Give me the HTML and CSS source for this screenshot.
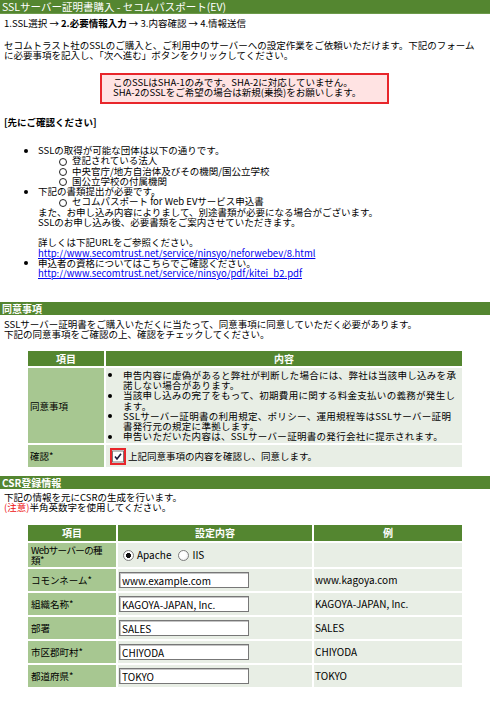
FILE: index.html
```html
<!DOCTYPE html>
<html lang="ja">
<head>
<meta charset="utf-8">
<title>SSLサーバー証明書購入</title>
<link rel="stylesheet" href="styles.css">
</head>
<body>
<div class="bar">SSLサーバー証明書購入 - セコムパスポート(EV)</div>
<div class="content">
  <p class="steps">1.SSL選択 → <b>2.必要情報入力</b> → 3.内容確認 → 4.情報送信</p>
  <p class="intro">セコムトラスト社のSSLのご購入と、ご利用中のサーバーへの設定作業をご依頼いただけます。下記のフォーム<br>に必要事項を記入し、「次へ進む」ボタンをクリックしてください。</p>
  <div class="notice">このSSLはSHA-1のみです。SHA-2に対応していません。<br>SHA-2のSSLをご希望の場合は新規(乗換)をお願いします。</div>
  <p class="confirm-title">[先にご確認ください]</p>
  <ul class="guide">
    <li>SSLの取得が可能な団体は以下の通りです。
      <ul>
        <li>登記されている法人</li>
        <li>中央官庁/地方自治体及びその機関/国公立学校</li>
        <li>国公立学校の付属機関</li>
      </ul>
    </li>
    <li>下記の書類提出が必要です。
      <ul>
        <li>セコムパスポート for Web EVサービス申込書</li>
      </ul>
      また、お申し込み内容によりまして、別途書類が必要になる場合がございます。<br>SSLのお申し込み後、必要書類をご案内させていただきます。<br><br>詳しくは下記URLをご参照ください。<br><a href="#">http://www.secomtrust.net/service/ninsyo/neforwebev/8.html</a>
    </li>
    <li>申込者の資格についてはこちらでご確認ください。<br><a href="#">http://www.secomtrust.net/service/ninsyo/pdf/kitei_b2.pdf</a></li>
  </ul>
</div>

<div class="section-bar bar-agree">同意事項</div>
<div class="content">
  <p class="sub-intro">SSLサーバー証明書をご購入いただくに当たって、同意事項に同意していただく必要があります。<br>下記の同意事項をご確認の上、確認をチェックしてください。</p>
  <table class="tbl tbl-agree">
    <colgroup><col class="c-a1"><col class="c-a2"></colgroup>
    <tr><th>項目</th><th>内容</th></tr>
    <tr>
      <td class="label">同意事項</td>
      <td class="val terms">
        <ul class="terms-list">
          <li>申告内容に虚偽があると弊社が判断した場合には、弊社は当該申し込みを承<br>諾しない場合があります。</li>
          <li>当該申し込みの完了をもって、初期費用に関する料金支払いの義務が発生し<br>ます。</li>
          <li>SSLサーバー証明書の利用規定、ポリシー、運用規程等はSSLサーバー証明<br>書発行元の規定に準拠します。</li>
          <li>申告いただいた内容は、SSLサーバー証明書の発行会社に提示されます。</li>
        </ul>
      </td>
    </tr>
    <tr class="row-check">
      <td class="label">確認*</td>
      <td class="val">
        <div class="agree">
          <span class="chk-frame"><svg width="12" height="13" viewBox="0 0 12 13"><rect x="0.5" y="1" width="11" height="11" fill="#fff" stroke="#7a7a7a"/><path d="M3 6.5 L5 9 L9 3.8" fill="none" stroke="#1a1a3a" stroke-width="1.6"/></svg></span>
          <span>上記同意事項の内容を確認し、同意します。</span>
        </div>
      </td>
    </tr>
  </table>
</div>

<div class="section-bar bar-csr">CSR登録情報</div>
<div class="content">
  <p class="csr-intro">下記の情報を元にCSRの生成を行います。<br><span class="warn">(注意)</span>半角英数字を使用してください。</p>
  <table class="tbl tbl-csr">
    <colgroup><col class="c-b1"><col class="c-b2"><col class="c-b3"></colgroup>
    <tr><th>項目</th><th>設定内容</th><th>例</th></tr>
    <tr class="row-web">
      <td class="label label-web">Webサーバーの種<br>類*</td>
      <td class="val radios-cell">
        <div class="radios">
          <span class="radio on"></span><span class="r-text">Apache</span>
          <span class="radio"></span><span class="r-text">IIS</span>
        </div>
      </td>
      <td class="val"></td>
    </tr>
    <tr>
      <td class="label">コモンネーム*</td>
      <td class="val input-cell"><input class="field" type="text" value="www.example.com"></td>
      <td class="val example">www.kagoya.com</td>
    </tr>
    <tr>
      <td class="label">組織名称*</td>
      <td class="val input-cell"><input class="field" type="text" value="KAGOYA-JAPAN, Inc."></td>
      <td class="val example">KAGOYA-JAPAN, Inc.</td>
    </tr>
    <tr>
      <td class="label">部署</td>
      <td class="val input-cell"><input class="field" type="text" value="SALES"></td>
      <td class="val example">SALES</td>
    </tr>
    <tr>
      <td class="label">市区郡町村*</td>
      <td class="val input-cell"><input class="field" type="text" value="CHIYODA"></td>
      <td class="val example">CHIYODA</td>
    </tr>
    <tr>
      <td class="label">都道府県*</td>
      <td class="val input-cell"><input class="field" type="text" value="TOKYO"></td>
      <td class="val example">TOKYO</td>
    </tr>
  </table>
</div>
</body>
</html>
```

FILE: styles.css
```css
* { box-sizing: border-box; }

body {
  margin: 0;
  background: #fff;
  color: #000;
  font-family: "Noto Sans CJK JP", "Noto Sans", sans-serif;
  font-size: 9.5px;
  line-height: 10px;
}

p { margin: 0; }

.bar {
  height: 14px;
  line-height: 13px;
  padding-left: 2px;
  background: #548630;
  color: #fff;
  font-size: 10.5px;
  border-bottom: 1px solid #6c9a4a;
}

.content { padding: 0 4px; }

.steps { margin-top: 4px; }
.steps b { font-weight: bold; }

.intro { margin-top: 11.5px; }

.notice {
  margin: 13.5px 0 0 96px;
  width: 289px;
  border: 2px solid #e8262b;
  background: #ffe3e3;
  padding: 2px 0 5px 11px;
}

.confirm-title {
  margin-top: 13px;
  font-weight: bold;
}

.guide {
  margin: 18px 0 0;
  padding-left: 34px;
  list-style: none;
  line-height: 10.25px;
}
.guide ul {
  margin: 0;
  padding-left: 34px;
  list-style: none;
}
.guide li { position: relative; }
.guide > li::before {
  content: "";
  position: absolute;
  left: -14px;
  top: 3.5px;
  width: 4px;
  height: 4px;
  border-radius: 50%;
  background: #000;
}
.guide ul li::before {
  content: "";
  position: absolute;
  left: -13px;
  top: 2.5px;
  width: 6px;
  height: 6px;
  border-radius: 50%;
  border: 1px solid #222;
}

a { color: #0000ee; text-decoration: underline; }

.section-bar {
  height: 13px;
  line-height: 13px;
  padding-left: 2px;
  background: #548630;
  color: #fff;
  font-weight: bold;
  font-size: 10px;
}
.bar-agree { margin-top: 24px; }
.bar-csr { margin-top: 7px; }

.sub-intro { margin-top: 4px; }
.csr-intro { margin-top: 3px; }
.warn { color: #ee1111; }

.tbl {
  border-collapse: separate;
  border-spacing: 2px;
  table-layout: fixed;
  margin-left: 22px;
}
.tbl-agree { width: 438px; margin-top: 10px; }
.tbl-csr { width: 438px; margin-top: 11px; }

.c-a1 { width: 76px; }
.c-a2 { width: 356px; }
.c-b1 { width: 88px; }
.c-b2 { width: 194px; }
.c-b3 { width: 148px; }

.tbl th {
  background: #548630;
  color: #fff;
  font-weight: bold;
  font-size: 10px;
  text-align: center;
  padding: 0;
  height: 15px;
  line-height: 15px;
}
.tbl-csr th { height: 16px; line-height: 16px; }

.tbl td {
  vertical-align: middle;
  padding: 0;
}
.label {
  background: #a7c791;
  padding-left: 2px !important;
}
.tbl-csr .label { padding-left: 3px !important; }
.val { background: #e8eee5; }

.terms { padding: 1.5px 4px !important; }
.terms-list {
  margin: 0;
  padding-left: 13px;
  list-style: none;
  line-height: 10.25px;
  letter-spacing: 0.3px;
}
.terms-list li { position: relative; }
.terms-list li::before {
  content: "";
  position: absolute;
  left: -15px;
  top: 3.5px;
  width: 4px;
  height: 4px;
  border-radius: 50%;
  background: #000;
}

.row-check td { height: 22px; }
.agree {
  display: flex;
  align-items: center;
  gap: 2px;
  padding-left: 4px;
}
.chk-frame {
  display: inline-flex;
  width: 16px;
  height: 17px;
  border: 2px solid #e8262b;
  background: #fff;
}

.tbl-csr td { height: 22px; }
.tbl-csr .row-web td { height: 24px; }
.label-web {
  white-space: nowrap;
  letter-spacing: -0.6px;
}

.radios {
  display: flex;
  align-items: center;
  padding-left: 5px;
}
.radio {
  width: 11px;
  height: 11px;
  border-radius: 50%;
  border: 1px solid #7d7d7d;
  background: radial-gradient(circle at 40% 40%, #fff 40%, #e2e2e2 100%);
  margin-right: 3px;
}
.radio.on {
  background: radial-gradient(circle, #111 0 2.3px, #fff 2.8px 60%, #e2e2e2 100%);
}
.r-text { font-size: 10px; margin-right: 6px; }
.r-text + .radio { margin-left: 1px; }

.input-cell { padding-left: 1px !important; }
.field {
  display: block;
  width: 130px;
  height: 16px;
  margin: 0;
  padding: 0 0 0 2px;
  border: 1px solid #777;
  box-shadow: inset 1px 1px 0 #c4c4c4;
  background: #fff;
  color: #000;
  font-family: "Noto Sans CJK JP", "Noto Sans", sans-serif;
  font-size: 10px;
  line-height: 14px;
}

.example {
  padding-left: 1px !important;
  font-size: 10px;
}
```
